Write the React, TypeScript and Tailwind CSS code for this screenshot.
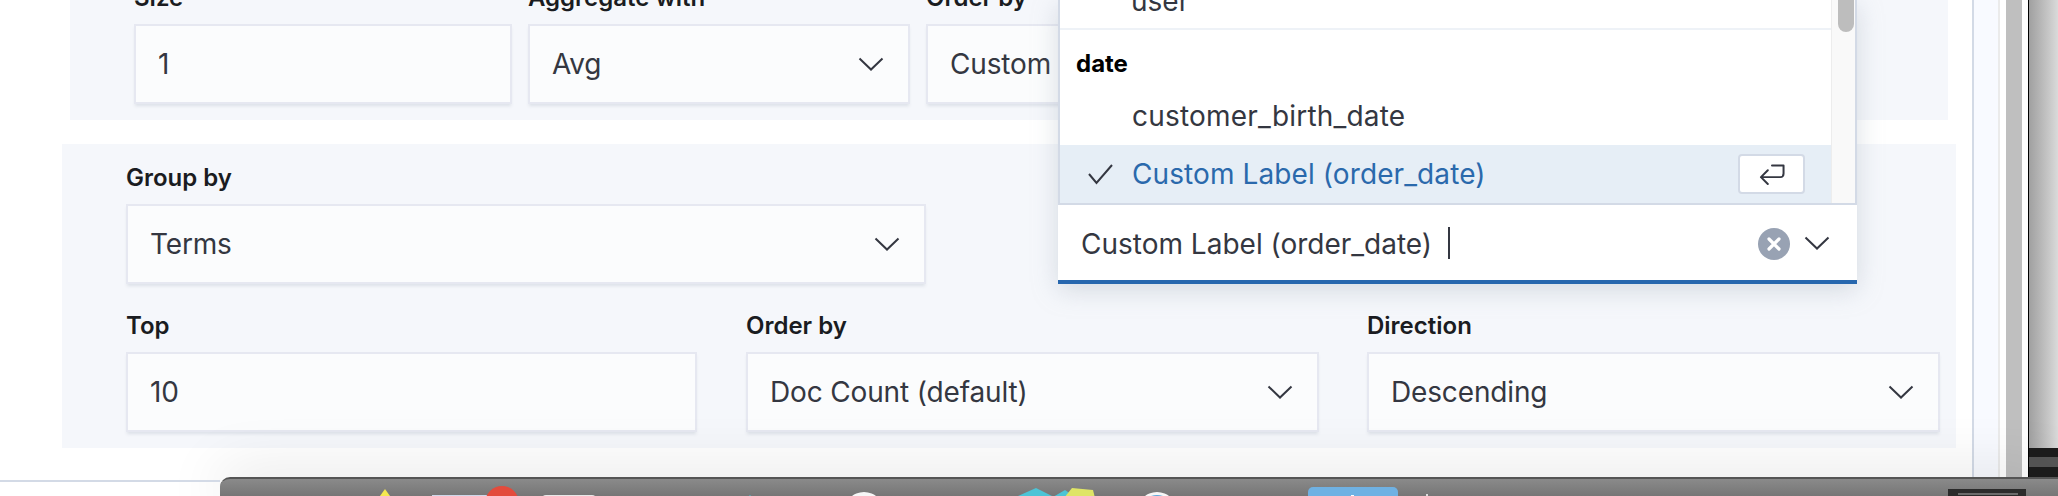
const Chevron = ({ className = "" }: { className?: string }) => (
  <svg className={`w-[26px] h-[14px] text-[#343741] shrink-0 ${className}`} viewBox="0 0 26 14" fill="none" stroke="currentColor" strokeWidth={2}>
    <path d="M1.5 1.5 L13 12.5 L24.5 1.5" />
  </svg>
);

function Field({ label, value, width, select = true }: { label: string; value: string; width: string; select?: boolean }) {
  return (
    <div className={`flex flex-col gap-[14px] shrink-0 ${width}`}>
      <label className="h-6 text-[24px] leading-6 font-semibold text-[#1a1c21] whitespace-nowrap">{label}</label>
      <div className="h-20 flex items-center justify-between pl-[22px] pr-[24px] bg-[#fbfcfd] border-2 border-[#e6e8f1] shadow-[0_3px_3px_-1px_rgba(152,162,179,0.25)] text-[28px] tracking-[-0.15px] text-[#343741] whitespace-nowrap">
        <span>{value}</span>
        {select && <Chevron />}
      </div>
    </div>
  );
}

function ComboBox() {
  return (
    <div className="absolute left-[1058px] top-0 w-[799px] shadow-[0_6px_24px_rgba(152,162,179,0.35)] bg-white">
      <div className="h-[205px] flex border-x-2 border-b-2 border-[#d3dae6]">
        <div className="flex-1 flex flex-col overflow-hidden">
          <div className="h-[28px] border-b-2 border-[#eef2f7] shrink-0 box-content relative">
            <span className="absolute left-[71px] -top-[20px] text-[28px] text-[#343741]">user</span>
          </div>
          <div className="h-[55px] flex items-center pl-[16px] pt-[12px] text-[24px] font-bold text-black shrink-0">date</div>
          <div className="h-[60px] flex items-center pl-[72px] pt-[2px] text-[28px] tracking-[0.2px] text-[#343741] shrink-0">customer_birth_date</div>
          <div className="flex-1 flex items-center bg-[#e6eef6] pl-[28px] pr-[26px]">
            <svg className="w-[26px] h-[22px] text-[#343741] shrink-0" viewBox="0 0 26 22" fill="none" stroke="currentColor" strokeWidth={2}>
              <path d="M1 11 L8.5 20 L24 2" />
            </svg>
            <span className="ml-[18px] flex-1 text-[28px] tracking-[0.1px] text-[#2a69ac] whitespace-nowrap">Custom Label (order_date)</span>
            <div className="w-[67px] h-10 flex items-center justify-center bg-white border-2 border-[#d3dae6] rounded-[4px]">
              <svg className="w-[26px] h-[21px] text-[#343741]" viewBox="0 0 24 20" fill="none" stroke="currentColor" strokeWidth={1.9} strokeLinecap="round" strokeLinejoin="round">
                <path d="M12 1.5 H23 V9 Q23 12.5 20 12.5 H1.5 M8 6 L1.5 12.5 L8 19" />
              </svg>
            </div>
          </div>
        </div>
        <div className="w-[24px] shrink-0 bg-[#f9f9f9] border-l border-[#ededed] relative">
          <div className="absolute left-[6px] -top-[10px] w-[16px] h-[42px] rounded-full bg-[#bdbdbd]" />
        </div>
      </div>
      <div className="h-[75px] flex items-center pl-[23px] pr-[27px] text-[28px] text-[#343741] bg-white">
        <span className="whitespace-nowrap mt-[2px]">Custom Label (order_date)</span>
        <span className="ml-[16px] w-[2px] h-[32px] bg-[#343741]" />
        <div className="ml-auto w-8 h-8 mt-[2px] rounded-full bg-[#98a2b3] flex items-center justify-center">
          <svg className="w-[14px] h-[14px] text-white" viewBox="0 0 14 14" fill="none" stroke="currentColor" strokeWidth={3.2} strokeLinecap="round">
            <path d="M2 2 L12 12 M12 2 L2 12" />
          </svg>
        </div>
        <Chevron className="ml-[14px]" />
      </div>
      <div className="h-1 bg-[#2767ae]" />
    </div>
  );
}

function Dock() {
  return (
    <div className="absolute left-[220px] right-0 bottom-0 h-[19px] bg-gradient-to-b from-[#8a8a8a] to-[#767676] border-t-2 border-[#555555] rounded-tl-[10px] shadow-[0_0_60px_rgba(0,0,0,0.2)] overflow-hidden">
      {/* tops of the dock icons, the window cuts them off */}
      <svg className="w-[1838px] h-[19px] block" viewBox="220 479 1838 19">
        <path d="M375 503 L385 489 L395 503 Z" fill="#f5e94f" />
        <rect x="432" y="495" width="56" height="10" fill="#cfd8ea" />
        <circle cx="502" cy="503" r="17" fill="#e34b3c" />
        <rect x="542" y="495" width="54" height="10" rx="4" fill="#e8e8e8" />
        <path d="M745 500 L750 495 L755 500 Z" fill="#4cc4d6" />
        <path d="M1018 496 L1036 488 L1054 497 Z" fill="#4cc4d6" />
        <path d="M1053 497 L1065 490 L1075 497 Z" fill="#4cc4d6" />
        <path d="M1064 498 L1072 488 L1093 490 L1095 498 Z" fill="#dfe566" />
        <circle cx="864" cy="512" r="20" fill="#f7f7f7" />
        <circle cx="1157" cy="512" r="20" fill="#f7f7f7" />
        <circle cx="1157" cy="513" r="18" fill="#5ea8dc" />
        <rect x="1308" y="487" width="90" height="20" rx="5" fill="#6fb1e3" />
        <rect x="1351" y="495" width="3" height="3" fill="#fff" />
        <rect x="1426" y="494" width="2" height="4" fill="#ddd" />
        <rect x="1948" y="489" width="78" height="10" fill="#2b2b2b" />
        <rect x="1958" y="493" width="60" height="2" fill="#6b6b6b" />
      </svg>
    </div>
  );
}

export default function App() {
  return (
    <div className="relative w-[2058px] h-[496px] overflow-hidden flex bg-white font-['Inter',sans-serif]">
      {/* page content */}
      <div className="w-[1972px] shrink-0 flex flex-col">
        <div className="ml-[70px] w-[1878px] h-[120px] shrink-0 bg-[#f5f7fb] flex items-end gap-4 pl-[64px] pb-4">
          <Field label="Size" value="1" width="w-[378px]" select={false} />
          <Field label="Aggregate with" value="Avg" width="w-[382px]" />
          <Field label="Order by" value="Custom" width="w-[380px]" />
        </div>
        <div className="mt-6 ml-[62px] w-[1894px] h-[304px] shrink-0 bg-[#f5f7fb] pl-[64px] pt-[22px] flex flex-col gap-[30px]">
          <Field label="Group by" value="Terms" width="w-[800px]" />
          <div className="flex gap-[49px]">
            <Field label="Top" value="10" width="w-[571px]" select={false} />
            <Field label="Order by" value="Doc Count (default)" width="w-[573px]" />
            <Field label="Direction" value="Descending" width="w-[573px] -ml-px" />
          </div>
        </div>
      </div>

      {/* window edges on the right */}
      <div className="w-[26px] shrink-0 bg-[#f8faff] border-l-2 border-[#d3dae6]" />
      <div className="w-[8px] shrink-0 bg-white border-l-2 border-[#ebebeb]" />
      <div className="w-4 shrink-0 bg-[#bfbfbf]" />
      <div className="w-[6px] shrink-0 bg-white" />
      <div className="flex-1 flex flex-col border-l border-black">
        <div className="h-[448px] shrink-0 bg-gradient-to-r from-[#a0a0a0] to-[#dadada]" />
        <div className="flex-1 bg-[#1c1c1c] flex flex-col pt-[9px]">
          <div className="h-[10px] bg-[#565656]" />
        </div>
      </div>

      <ComboBox />
      <Dock />
      <div className="absolute left-0 bottom-[14px] w-[220px] h-[2px] bg-[#d3dae6]" />
    </div>
  );
}
